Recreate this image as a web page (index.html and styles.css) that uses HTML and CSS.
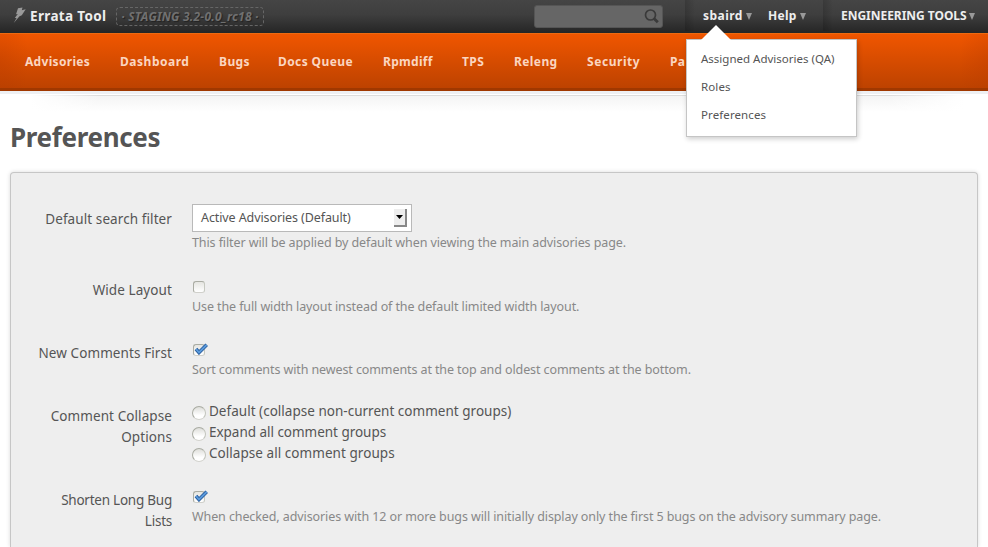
FILE: index.html
```html
<!DOCTYPE html>
<html lang="en">
<head>
<meta charset="utf-8">
<title>Preferences - Errata Tool</title>
<link rel="stylesheet" href="styles.css">
</head>
<body>
<header class="topbar">
  <div class="brand">
    <svg class="bolt" width="14" height="17" viewBox="0 0 14 17"><path d="M5 1.2 L9.5 0.5 L8.8 3.2 L12.7 2.2 L8.8 8.2 L6.5 9.2 L0.7 16 L3.6 11 L1.8 11 L4.8 7 L3 7.2 Z"/></svg>
    <span class="brand-name">Errata Tool</span>
    <span class="staging">· STAGING 3.2-0.0_rc18 ·</span>
  </div>
  <div class="search">
    <svg width="16" height="16" viewBox="0 0 16 16"><circle cx="6.5" cy="6" r="5"/><path d="M10 9.5 L13.8 13.3" class="handle"/></svg>
  </div>
  <div class="user-menu">
    <div class="menu-link sbaird"><span>sbaird</span><i class="caret"></i>
      <div class="dropdown">
        <svg class="pointer" width="30" height="15" viewBox="0 0 30 15"><path d="M0 15 L15 0 L30 15 Z"/></svg>
        <a>Assigned Advisories (QA)</a>
        <a class="wide">Roles</a>
        <a class="wide">Preferences</a>
      </div>
    </div>
    <div class="menu-link help"><span>Help</span><i class="caret"></i></div>
  </div>
  <div class="tools-menu"><span>ENGINEERING TOOLS</span><i class="caret"></i></div>
</header>
<nav class="nav">
  <a class="n-adv">Advisories</a><a class="n-dash">Dashboard</a><a class="n-bugs">Bugs</a><a class="n-docs">Docs Queue</a><a class="n-rpm">Rpmdiff</a><a class="n-tps">TPS</a><a class="n-rel">Releng</a><a class="n-sec">Security</a><a>Pa</a>
</nav>
<div class="nav-shadow"></div>
<main>
  <h1>Preferences</h1>
  <form class="panel">
    <div class="row row-select">
      <div class="label">Default search filter</div>
      <div>
        <div class="select"><span>Active Advisories (Default)</span><i class="arrow"></i></div>
        <p class="hint">This filter will be applied by default when viewing the main advisories page.</p>
      </div>
    </div>
    <div class="row">
      <div class="label">Wide Layout</div>
      <div>
        <div class="check"><i class="box"></i></div>
        <p class="hint">Use the full width layout instead of the default limited width layout.</p>
      </div>
    </div>
    <div class="row">
      <div class="label">New Comments First</div>
      <div>
        <div class="check"><i class="box"></i><svg class="tick" width="15" height="12" viewBox="0 0 15 12"><path d="M2 6 L5 9.5 L12.7 1.8"/><path class="shine" d="M2 6 L5 9.5 L12.7 1.8"/></svg></div>
        <p class="hint">Sort comments with newest comments at the top and oldest comments at the bottom.</p>
      </div>
    </div>
    <div class="row row-radios">
      <div class="label">Comment Collapse Options</div>
      <div>
        <div class="radio"><i></i><span>Default (collapse non-current comment groups)</span></div>
        <div class="radio"><i></i><span class="tight">Expand all comment groups</span></div>
        <div class="radio"><i></i><span class="loose">Collapse all comment groups</span></div>
      </div>
    </div>
    <div class="row row-last">
      <div class="label label-tight">Shorten Long Bug Lists</div>
      <div>
        <div class="check"><i class="box"></i><svg class="tick" width="15" height="12" viewBox="0 0 15 12"><path d="M2 6 L5 9.5 L12.7 1.8"/><path class="shine" d="M2 6 L5 9.5 L12.7 1.8"/></svg></div>
        <p class="hint">When checked, advisories with 12 or more bugs will initially display only the first 5 bugs on the advisory summary page.</p>
      </div>
    </div>
  </form>
</main>
</body>
</html>
```
FILE: styles.css
```css
* { box-sizing: border-box; }
html, body { height: 547px; overflow: hidden; }
body { margin: 0; background: #fff; color: #555; font-family: "Noto Sans", sans-serif; font-size: 14px; }
span, a, .hint { white-space: nowrap; }

.topbar { display: flex; height: 33px; background: linear-gradient(#454545, #3e3e3e 45%, #252525); color: #eee; font-weight: 700; font-size: 12px; }
.brand { display: flex; width: 534px; padding: 7px 0 0 13px; }
.bolt { fill: #999; }
.brand-name { width: 76px; margin-left: 3px; font-size: 13.5px; line-height: 18px; letter-spacing: .35px; }
.staging { width: 148px; height: 19px; margin-left: 10px; border: 1px dashed #666; border-radius: 4px; color: #707070; font-size: 12px; font-style: italic; line-height: 17px; text-align: center; letter-spacing: .24px; text-shadow: 1px 1px 1px #222; }
.search { display: flex; justify-content: flex-end; width: 129px; height: 23px; margin-top: 5px; padding: 3px 2px 0 0; border: 1px solid #555; border-radius: 3px; background: #666; }
.search svg { fill: none; stroke: #3a3a3a; stroke-width: 1.7; }
.search .handle { stroke-width: 2.8; }
.user-menu, .tools-menu { display: flex; height: 31px; line-height: 31px; background: linear-gradient(90deg, rgba(0,0,0,.16), transparent 10px); }
.user-menu { width: 138px; margin-left: 22px; padding-left: 18px; }
.tools-menu { width: 165px; padding-left: 18px; }
.tools-menu span { width: 125px; letter-spacing: -.03px; }
.menu-link { position: relative; display: flex; }
.sbaird { width: 65px; }
.sbaird > span { width: 40px; letter-spacing: .45px; }
.help > span { width: 29px; letter-spacing: .3px; }
.caret { width: 6px; height: 7px; margin: 13px 0 0 3px; background: #999; clip-path: polygon(0 0, 100% 0, 50% 100%); }
.dropdown { position: absolute; z-index: 2; top: 39px; left: -17px; width: 171px; height: 98px; padding: 5px 14px; border: 1px solid #c5c5c5; background: #fff; box-shadow: 1px 2px 5px rgba(0,0,0,.2); color: #555; }
.dropdown a { display: block; font-size: 11.5px; font-weight: 400; line-height: 28px; }
.dropdown .wide { letter-spacing: .1px; }
.pointer { position: absolute; top: -15px; left: 14px; fill: #fff; }

.nav { display: flex; height: 58px; padding-left: 25px; border-top: 1px solid #ed6a10; border-bottom: 3px solid #a03800; background: radial-gradient(ellipse 28px 65px at 0 50%, rgba(170,50,0,.22), transparent), radial-gradient(ellipse 28px 60px at 100% 50%, rgba(170,50,0,.22), transparent), linear-gradient(#f05600, #bd4200); color: #fbd6c0; font-size: 12px; font-weight: 700; line-height: 56px; letter-spacing: .4px; }
.n-adv { width: 95px; letter-spacing: .32px; }
.n-dash { width: 99px; letter-spacing: .52px; }
.n-bugs { width: 59px; }
.n-docs { width: 105px; }
.n-rpm { width: 79px; letter-spacing: .3px; }
.n-tps { width: 52px; }
.n-rel { width: 73px; }
.n-sec { width: 83px; letter-spacing: .56px; }
.nav-shadow { height: 25px; border-top: 3px solid #eef0f3; background: linear-gradient(90deg, #fff 30px, transparent 100px, transparent 888px, #fff 965px), linear-gradient(#fff 1px, #ddd 1px, #ddd 2px, #f4f4f4 2px, #fff 18px); }

main { padding: 0 10px; }
h1 { margin: 0; height: 56px; font-size: 26px; line-height: 42px; letter-spacing: -.33px; }
.panel { height: 375px; padding: 31px 0 0 20px; border: 1px solid #c6c6c6; border-bottom: 0; border-radius: 4px 4px 0 0; background: #eee; box-shadow: 0 0 4px rgba(0,0,0,.15); }
.row { display: grid; grid-template-columns: 141px 1fr; column-gap: 20px; height: 63px; }
.row-select { height: 71px; }
.row-radios { height: 84px; }
.row-last { height: 62px; }
.label { padding-top: 5px; font-size: 13.5px; line-height: 21px; text-align: right; letter-spacing: .09px; }
.label-tight { letter-spacing: -.24px; }
.hint { margin: 0; color: #888; font-size: 12.5px; line-height: 20px; letter-spacing: -.1px; }
.select { display: flex; justify-content: space-between; width: 220px; height: 28px; margin-bottom: 1px; padding: 4px 4px 0 8px; border: 1px solid #b9b9b9; background: #fff; font-size: 12.5px; line-height: 18px; letter-spacing: -.1px; }
.arrow { display: grid; place-items: center; width: 13px; height: 18px; border-right: 2px solid #888; border-bottom: 2px solid #888; background: #eee; }
.arrow::before { content: ""; width: 7px; height: 4px; background: #000; clip-path: polygon(0 0, 100% 0, 50% 100%); }
.check { position: relative; height: 22px; padding: 6px 0 0 1px; }
.box { display: block; width: 12px; height: 12px; border: 1px solid #aaaca3; border-right-color: #c6c8c0; border-bottom-color: #d0d0cb; border-radius: 3px; background: linear-gradient(#e5e5e1, #fff); }
.tick { position: absolute; top: 5px; left: 2px; fill: none; stroke: #2b5f9f; stroke-width: 3.6; }
.tick .shine { stroke: #5b9bdd; stroke-width: 1.8; }
.radio { display: flex; height: 21px; font-size: 13.5px; line-height: 21px; letter-spacing: .02px; }
.radio .tight { letter-spacing: -.03px; }
.radio .loose { letter-spacing: .05px; }
.radio i { width: 14px; height: 14px; margin: 5px 3px 0 0; border: 1px solid #a9aba2; border-right-color: #c2c4bc; border-bottom-color: #d3d3ce; border-radius: 50%; background: linear-gradient(#dededa, #fff 70%); }
```
